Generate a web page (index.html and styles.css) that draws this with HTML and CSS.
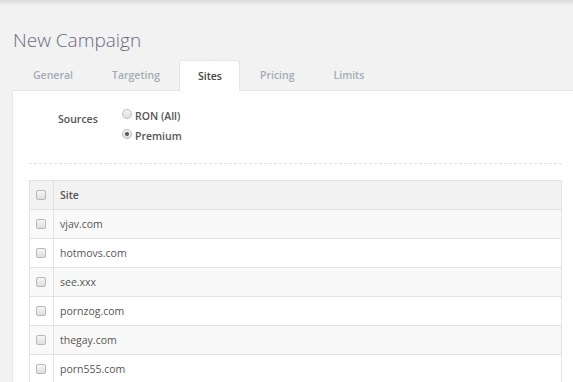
FILE: index.html
```html
<!DOCTYPE html>
<html lang="en">
<head>
    <meta charset="UTF-8">
    <title>New Campaign</title>
    <link rel="stylesheet" href="styles.css">
</head>
<body>
    <div class="page">
        <h1>New Campaign</h1>
        <ul class="tabs">
            <li>General</li>
            <li>Targeting</li>
            <li class="active">Sites</li>
            <li>Pricing</li>
            <li>Limits</li>
        </ul>
        <div class="panel">
            <div class="form-row">
                <label class="row-label">Sources</label>
                <div class="radios">
                    <label class="radio"><span class="dot"></span>RON (All)</label>
                    <label class="radio"><span class="dot checked"></span>Premium</label>
                </div>
            </div>
            <hr class="dashed">
            <table class="sites">
                <thead>
                    <tr><th class="check"><span class="box"></span></th><th>Site</th></tr>
                </thead>
                <tbody>
                    <tr><td class="check"><span class="box"></span></td><td>vjav.com</td></tr>
                    <tr><td class="check"><span class="box"></span></td><td>hotmovs.com</td></tr>
                    <tr><td class="check"><span class="box"></span></td><td>see.xxx</td></tr>
                    <tr><td class="check"><span class="box"></span></td><td>pornzog.com</td></tr>
                    <tr><td class="check"><span class="box"></span></td><td>thegay.com</td></tr>
                    <tr><td class="check"><span class="box"></span></td><td>porn555.com</td></tr>
                </tbody>
            </table>
        </div>
    </div>
</body>
</html>
```
FILE: styles.css
```css
* {
    margin: 0;
    padding: 0;
    box-sizing: border-box;
}
body {
    font-family: 'Open Sans', sans-serif;
    background: linear-gradient(#dadada 0, #f2f2f2 6px) #f2f2f2;
    color: #555;
    font-size: 10.5px;
    height: 382px;
    overflow: hidden;
}
.page {
    padding-left: 12px;
}
h1 {
    font-size: 19px;
    font-weight: 300;
    line-height: 24px;
    color: #6b6b7b;
    margin: 28px 0 8px 1px;
}
.tabs {
    list-style: none;
    display: flex;
    height: 30px;
    padding-left: 1px;
}
.tabs li {
    padding: 0 19px 0 20px;
    line-height: 30px;
    font-weight: 600;
    color: #a6a9b6;
}
.tabs li.active {
    background-color: #fff;
    color: #444;
    border: 1px solid #e6e6e6;
    border-bottom: none;
    border-radius: 3px 3px 0 0;
    padding: 0 17px 0 18px;
    position: relative;
    z-index: 1;
    height: 31px;
}
.panel {
    background-color: #fff;
    border-top: 1px solid #e6e6e6;
    border-left: 1px solid #e6e6e6;
    padding: 15px 11px 40px 16px;
    height: 300px;
}
.form-row {
    display: flex;
}
.row-label {
    width: 93px;
    padding-left: 29px;
    font-weight: 600;
    line-height: 20px;
    margin-top: 3px;
    color: #555;
}
.radios {
    display: flex;
    flex-direction: column;
}
.radio {
    display: flex;
    align-items: center;
    line-height: 20px;
    font-weight: 600;
    color: #555;
}
.dot {
    width: 10px;
    height: 10px;
    border-radius: 50%;
    border: 1px solid #bdbdbd;
    background: linear-gradient(#f4f4f4, #dcdcdc);
    margin-right: 3px;
    margin-top: -5px;
    position: relative;
}
.dot.checked::after {
    content: '';
    position: absolute;
    left: 2px;
    top: 2px;
    width: 4px;
    height: 4px;
    border-radius: 50%;
    background-color: #555;
}
.dashed {
    border: none;
    border-top: 1px dashed #e2e2e2;
    margin: 17px 0 16px;
}
.sites {
    width: 100%;
    border-collapse: collapse;
    border: 1px solid #e2e2e2;
}
.sites th,
.sites td {
    border: 1px solid #e2e2e2;
    height: 29px;
    text-align: left;
    padding: 0 6px;
    font-size: 10.5px;
}
.sites th {
    background-color: #f2f2f2;
    font-weight: 600;
}
.sites tbody tr:nth-child(odd) {
    background-color: #f9f9f9;
}
.sites .check {
    width: 24px;
    padding: 0 0 0 6px;
}
.box {
    display: block;
    width: 10px;
    height: 10px;
    border: 1px solid #b9b9b9;
    border-radius: 2px;
    background: linear-gradient(#f6f6f6, #dedede);
}
```
